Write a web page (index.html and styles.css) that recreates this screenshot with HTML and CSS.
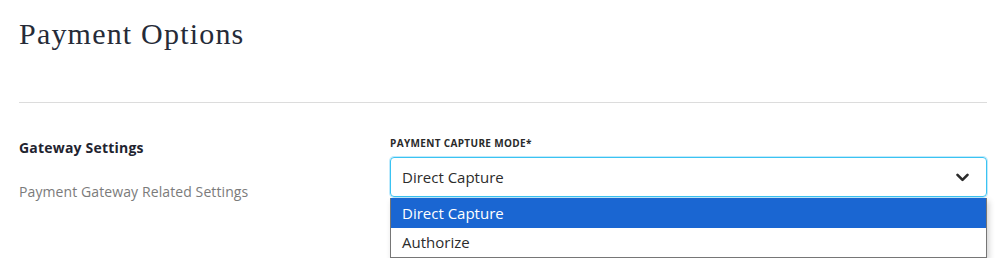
FILE: index.html
```html
<!DOCTYPE html>
<html>
<head>
    <title>Payment Options</title>
    <link rel="stylesheet" href="styles.css">
</head>
<body>
    <div class="page">
        <h1 class="title">Payment Options</h1>
        <div class="divider"></div>
        <div class="row">
            <div class="side">
                <p class="side-title">Gateway Settings</p>
                <p class="side-desc">Payment Gateway Related Settings</p>
            </div>
            <div class="field">
                <p class="label">PAYMENT CAPTURE MODE*</p>
                <div class="select">
                    <span>Direct Capture</span>
                    <svg class="chevron" width="13" height="9" viewBox="0 0 13 9">
                        <path d="M1.5 1.8 L6.5 6.8 L11.5 1.8" fill="none" stroke="#2b2b2b" stroke-width="2.6" stroke-linecap="round" stroke-linejoin="round"/>
                    </svg>
                </div>
                <div class="menu">
                    <div class="option selected">Direct Capture</div>
                    <div class="option">Authorize</div>
                </div>
            </div>
        </div>
    </div>
</body>
</html>
```

FILE: styles.css
```css
body{
    margin: 0;
    background-color: white;
    font-family: "Open Sans", "Noto Sans", sans-serif;
}
.page{
    padding: 0 19px;
}
.title{
    margin: 0;
    padding-top: 17px;
    height: 102px;
    box-sizing: border-box;
    font-family: "Liberation Serif", serif;
    font-weight: 400;
    font-size: 30px;
    letter-spacing: 1.2px;
    color: #262b38;
}
.divider{
    height: 1px;
    background-color: #dcdcdc;
}
.row{
    display: flex;
    flex-direction: row;
}
.side{
    width: 371px;
    padding-top: 35px;
}
.side-title{
    margin: 0;
    font-size: 14px;
    font-weight: 700;
    letter-spacing: 0.2px;
    color: #1f2430;
}
.side-desc{
    margin: 25px 0 0 0;
    font-size: 14px;
    letter-spacing: 0.1px;
    color: #7b7b7b;
}
.field{
    flex: 1;
    padding-top: 33px;
}
.label{
    margin: 0 0 7px 0;
    font-size: 10px;
    font-weight: 700;
    color: #2a2a2a;
    letter-spacing: 0.35px;
}
.select{
    height: 38px;
    border: 1px solid #3ac3f2;
    border-radius: 4px;
    box-shadow: 0 0 0 1px #bfeafc;
    display: flex;
    align-items: center;
    justify-content: space-between;
    padding: 0 17px 0 11px;
    font-size: 15px;
    color: #2c2c2c;
}
.chevron{
    margin-top: 1px;
}
.menu{
    margin-top: 1px;
    border: 1px solid #767676;
    border-top: none;
    background-color: white;
    box-shadow: 2px 3px 6px rgba(0,0,0,0.18);
}
.option{
    height: 29px;
    line-height: 29px;
    padding-left: 11px;
    font-size: 15px;
    color: #2c2c2c;
}
.selected{
    height: 30px;
    line-height: 31px;
    background-color: #1a66d2;
    color: white;
}
```
